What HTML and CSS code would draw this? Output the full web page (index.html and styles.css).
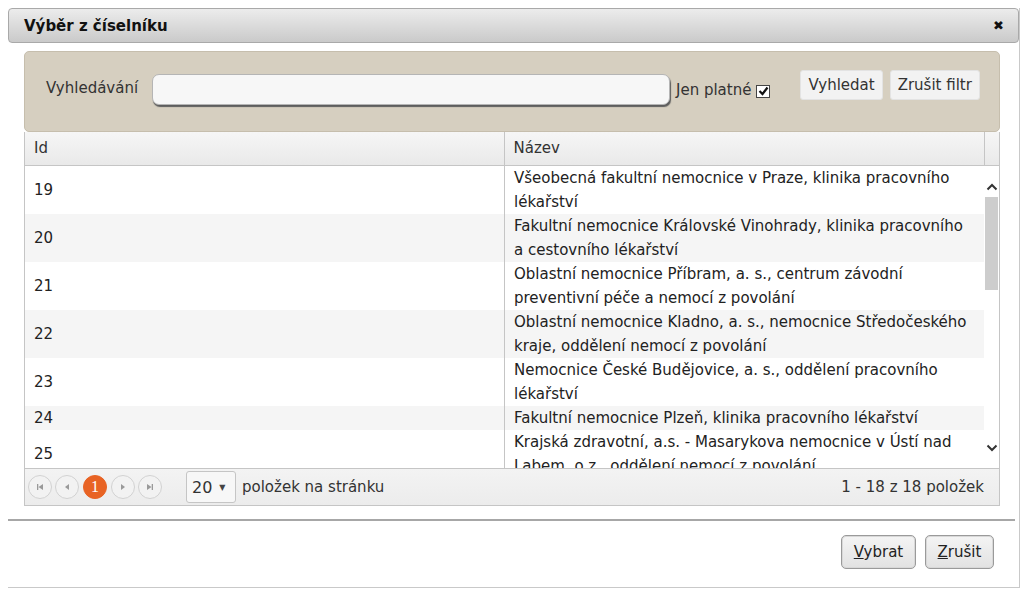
FILE: index.html
```html
<!DOCTYPE html>
<html lang="cs">
<head>
    <meta charset="UTF-8">
    <title>Výběr z číselníku</title>
    <link rel="stylesheet" href="styles.css">
</head>
<body>
<div class="dialog">
    <div class="dialog-title">
        <span>Výběr z číselníku</span>
        <span class="close">&#10006;</span>
    </div>
    <div class="dialog-body">
        <div class="filter">
            <label class="filter-label">Vyhledávání</label>
            <input class="filter-input" type="text">
            <span class="only-valid">Jen platné
                <span class="check"><svg width="11" height="10" viewBox="0 0 11 10"><path d="M1.5 5 L4.5 8 L9.5 1.5" fill="none" stroke="#111" stroke-width="2.2"/></svg></span>
            </span>
            <div class="filter-buttons">
                <button class="btn">Vyhledat</button>
                <button class="btn">Zrušit filtr</button>
            </div>
        </div>
        <div class="grid">
            <div class="grid-head">
                <div class="col-id">Id</div>
                <div class="col-name">Název</div>
                <div class="col-scroll"></div>
            </div>
            <div class="grid-body">
                <div class="rows">
                    <div class="row"><div class="col-id">19</div><div class="col-name">Všeobecná fakultní nemocnice v Praze, klinika pracovního lékařství</div></div>
                    <div class="row alt"><div class="col-id">20</div><div class="col-name">Fakultní nemocnice Královské Vinohrady, klinika pracovního a cestovního lékařství</div></div>
                    <div class="row"><div class="col-id">21</div><div class="col-name">Oblastní nemocnice Příbram, a. s., centrum závodní preventivní péče a nemocí z povolání</div></div>
                    <div class="row alt"><div class="col-id">22</div><div class="col-name">Oblastní nemocnice Kladno, a. s., nemocnice Středočeského kraje, oddělení nemocí z povolání</div></div>
                    <div class="row"><div class="col-id">23</div><div class="col-name">Nemocnice České Budějovice, a. s., oddělení pracovního lékařství</div></div>
                    <div class="row alt"><div class="col-id">24</div><div class="col-name">Fakultní nemocnice Plzeň, klinika pracovního lékařství</div></div>
                    <div class="row"><div class="col-id">25</div><div class="col-name">Krajská zdravotní, a.s. - Masarykova nemocnice v Ústí nad Labem, o.z., oddělení nemocí z povolání</div></div>
                </div>
                <div class="scrollbar">
                    <svg class="arrow" width="12" height="8" viewBox="0 0 12 8"><path d="M1.5 6.5 L6 2 L10.5 6.5" fill="none" stroke="#333" stroke-width="2"/></svg>
                    <div class="track"><div class="thumb"></div></div>
                    <svg class="arrow" width="12" height="8" viewBox="0 0 12 8"><path d="M1.5 1.5 L6 6 L10.5 1.5" fill="none" stroke="#333" stroke-width="2"/></svg>
                </div>
            </div>
            <div class="pager">
                <div class="pages">
                    <span class="page-btn"><svg width="8" height="8" viewBox="0 0 8 8"><path d="M1 1h1.3v6H1z M7 1v6L2.5 4z" fill="#999"/></svg></span>
                    <span class="page-btn"><svg width="8" height="8" viewBox="0 0 8 8"><path d="M6 1v6L2 4z" fill="#999"/></svg></span>
                    <span class="page-btn active">1</span>
                    <span class="page-btn"><svg width="8" height="8" viewBox="0 0 8 8"><path d="M2 1v6L6 4z" fill="#999"/></svg></span>
                    <span class="page-btn"><svg width="8" height="8" viewBox="0 0 8 8"><path d="M1 1v6L5.5 4z M5.7 1H7v6H5.7z" fill="#999"/></svg></span>
                </div>
                <div class="page-size">20 <span class="caret">&#9660;</span></div>
                <span class="page-size-label">položek na stránku</span>
                <span class="pager-info">1 - 18 z 18 položek</span>
            </div>
        </div>
    </div>
    <div class="dialog-footer">
        <button class="btn-footer"><u>V</u>ybrat</button>
        <button class="btn-footer"><u>Z</u>rušit</button>
    </div>
</div>
</body>
</html>
```
FILE: styles.css
```css
*{
    margin: 0;
    padding: 0;
    box-sizing: border-box;
}
body{
    background: #fff;
    font-family: "DejaVu Sans", Verdana, sans-serif;
    font-size: 15px;
    color: #222;
}
.dialog{
    width: 1012px;
    height: 580px;
    margin: 8px 0 0 8px;
    border-right: 1px solid #c9c9c9;
    border-bottom: 1px solid #c9c9c9;
    display: flex;
    flex-direction: column;
}
.dialog-title{
    height: 35px;
    border: 1px solid #a9a9a9;
    border-radius: 4px;
    background: linear-gradient(#ececec, #cacaca);
    display: flex;
    align-items: center;
    justify-content: space-between;
    padding: 0 14px 0 15px;
    font-weight: bold;
    font-size: 15px;
    color: #111;
}
.close{
    font-size: 13px;
    color: #111;
}
.dialog-body{
    padding: 8px 19px 0 16px;
}
.filter{
    height: 81px;
    background: #d6cfc0;
    border: 1px solid #c6bead;
    border-radius: 5px;
    display: flex;
    align-items: center;
    padding: 0 10px 0 21px;
    white-space: nowrap;
}
.filter > *{
    flex: none;
}
.filter-label{
    width: 106px;
    color: #333;
    margin-bottom: 7px;
}
.filter-input{
    width: 518px;
    height: 31px;
    background: #f7f7f7;
    border: 1px solid #b5b5b5;
    border-radius: 7px;
    box-shadow: 1px 2px 1px #5d5d5d;
    margin-bottom: 4px;
}
.only-valid{
    margin-left: 6px;
    color: #333;
    display: flex;
    align-items: center;
    gap: 5px;
    margin-bottom: 4px;
}
.check{
    width: 14px;
    height: 13px;
    border: 1px solid #444;
    background: #fff;
    display: flex;
    align-items: center;
    justify-content: center;
    margin-top: 3px;
}
.filter-buttons{
    margin-left: 30px;
    display: flex;
    gap: 7px;
    margin-bottom: 14px;
}
.btn{
    height: 30px;
    padding: 0 7px;
    font-family: "DejaVu Sans", Verdana, sans-serif;
    font-size: 15px;
    color: #333;
    background: #f2f2f2;
    border: 1px solid #e3e3e3;
    border-radius: 3px;
    white-space: nowrap;
}
.grid{
    border: 1px solid #c5c5c5;
    border-top: none;
}
.grid-head{
    display: flex;
    height: 34px;
    background: linear-gradient(#f6f6f6, #e9e9e9);
    border-bottom: 1px solid #c5c5c5;
    line-height: 33px;
    color: #333;
}
.col-id{
    width: 480px;
    padding-left: 9px;
    border-right: 1px solid #c5c5c5;
    display: flex;
    align-items: center;
}
.col-name{
    width: 480px;
    padding-left: 9px;
    padding-right: 12px;
}
.col-scroll{
    width: 15px;
    border-left: 1px solid #c5c5c5;
}
.grid-body{
    display: flex;
    height: 302px;
    overflow: hidden;
}
.rows{
    width: 959px;
}
.row{
    display: flex;
    line-height: 24px;
    background: #fff;
}
.row.alt{
    background: #f5f5f5;
}
.row .col-name{
    width: 479px;
    padding-left: 9px;
}
.scrollbar{
    width: 16px;
    background: #fff;
    display: flex;
    flex-direction: column;
    align-items: center;
    padding-top: 17px;
}
.arrow{
    flex: none;
}
.track{
    flex: 1;
    width: 100%;
    padding: 6px 1px 0;
}
.thumb{
    height: 93px;
    background: #cdcdcd;
}
.scrollbar .arrow:last-child{
    margin-bottom: 16px;
}
.pager{
    height: 37px;
    border-top: 1px solid #c5c5c5;
    background: linear-gradient(#f3f3f3, #ececec);
    display: flex;
    align-items: center;
    padding: 0 15px 0 3px;
    color: #333;
}
.pages{
    display: flex;
    gap: 3px;
}
.page-btn{
    width: 24px;
    height: 24px;
    border: 1px solid #d2d2d2;
    border-radius: 50%;
    background: #f2f2f2;
    display: flex;
    align-items: center;
    justify-content: center;
}
.page-btn.active{
    background: #e86324;
    border-color: #e86324;
    color: #fff;
    font-family: "Liberation Serif", serif;
    font-size: 16px;
    margin: 0 1px;
}
.page-size{
    margin-left: 24px;
    width: 50px;
    height: 32px;
    border: 1px solid #c5c5c5;
    border-radius: 3px;
    background: #f7f7f7;
    display: flex;
    align-items: center;
    padding-left: 5px;
    gap: 7px;
    font-size: 16px;
}
.caret{
    font-size: 8px;
    color: #444;
}
.page-size-label{
    margin-left: 6px;
}
.pager-info{
    margin-left: auto;
}
.dialog-footer{
    margin-top: 13px;
    border-top: 2px solid #a7a7a7;
    flex: 1;
    display: flex;
    justify-content: flex-end;
    align-items: flex-start;
    gap: 9px;
    padding: 14px 21px 0 0;
    margin-right: 4px;
}
.btn-footer{
    height: 34px;
    padding: 0 8px;
    font-family: "DejaVu Sans", Verdana, sans-serif;
    font-size: 15px;
    color: #222;
    background: linear-gradient(#f4f4f4, #e2e2e2);
    border: 1px solid #9a9a9a;
    box-shadow: inset 0 0 0 1px #d8d8d8;
    border-radius: 5px;
}
.btn-footer:first-child{
    width: 75px;
}
.btn-footer:last-child{
    width: 69px;
}
```
